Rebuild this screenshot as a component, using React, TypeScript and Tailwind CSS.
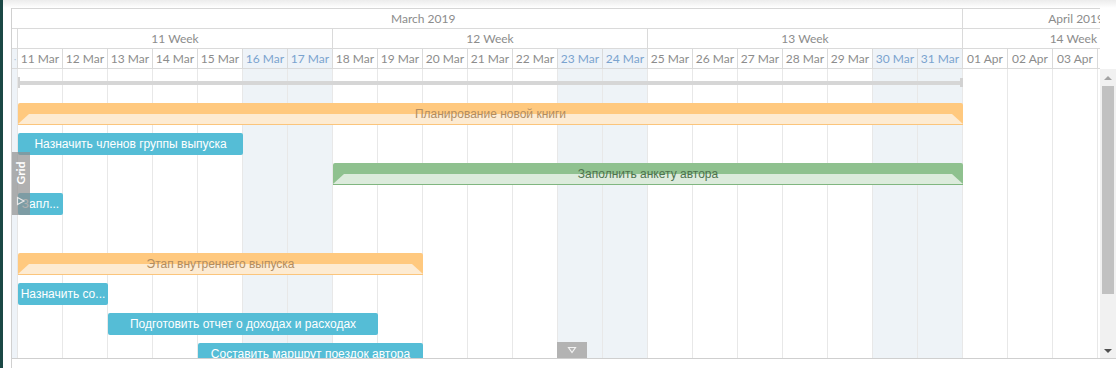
import React from "react";

type Row =
  | { kind: "summary"; start: number; len: number }
  | { kind: "project" | "green" | "task"; start: number; len: number; text: string }
  | { kind: "empty" };

const DAY = 45;
const OFF = 6;

const days = [
  "11 Mar", "12 Mar", "13 Mar", "14 Mar", "15 Mar", "16 Mar", "17 Mar",
  "18 Mar", "19 Mar", "20 Mar", "21 Mar", "22 Mar", "23 Mar", "24 Mar",
  "25 Mar", "26 Mar", "27 Mar", "28 Mar", "29 Mar", "30 Mar", "31 Mar",
  "01 Apr", "02 Apr", "03 Apr",
];
const weekend = (i: number) => [5, 6, 12, 13, 19, 20].includes(i);

const rows: Row[] = [
  { kind: "summary", start: 0, len: 21 },
  { kind: "project", start: 0, len: 21, text: "Планирование новой книги" },
  { kind: "task", start: 0, len: 5, text: "Назначить членов группы выпуска" },
  { kind: "green", start: 7, len: 14, text: "Заполнить анкету автора" },
  { kind: "task", start: 0, len: 1, text: "Запл..." },
  { kind: "empty" },
  { kind: "project", start: 0, len: 9, text: "Этап внутреннего выпуска" },
  { kind: "task", start: 0, len: 2, text: "Назначить со..." },
  { kind: "task", start: 2, len: 6, text: "Подготовить отчет о доходах и расходах" },
  { kind: "task", start: 4, len: 5, text: "Составить маршрут поездок автора" },
];

function SummaryBar({ start, len }: { start: number; len: number }) {
  return (
    <div className="flex items-center h-[11px] mt-[8px]" style={{ marginLeft: OFF + start * DAY, width: len * DAY }}>
      <div className="w-[2px] h-[11px] bg-[#d2d2d2]" />
      <div className="flex-1 h-[4px] bg-[#d6d6d6]" />
      <div className="w-[3px] h-[9px] bg-[#d2d2d2]" />
    </div>
  );
}

function StageBar({ start, len, text, green }: { start: number; len: number; text: string; green?: boolean }) {
  const dark = green ? "bg-[#8fc18f]" : "bg-[#ffc97f]";
  const light = green ? "bg-[#dcebdc]" : "bg-[#fdebd2]";
  const line = green ? "border-[#80b680]" : "border-[#fbc57c]";
  const color = green ? "text-[#4e734e]" : "text-[#b28d61]";
  return (
    <div
      className={`relative h-[22px] flex flex-col rounded-t-[2px] overflow-hidden border-b ${line}`}
      style={{ marginLeft: OFF + start * DAY, width: len * DAY }}
    >
      <div className={`h-[11px] ${dark}`} />
      <div className={`flex-1 ${dark}`}>
        <div className={`h-full ${light} [clip-path:polygon(11px_0,calc(100%-11px)_0,100%_100%,0_100%)]`} />
      </div>
      <div className={`absolute inset-0 flex items-center justify-center text-[12px] whitespace-nowrap ${color}`}>
        {text}
      </div>
    </div>
  );
}

function TaskBar({ start, len, text }: { start: number; len: number; text: string }) {
  return (
    <div
      className="h-[22px] rounded-[2px] bg-[#55bdd6] text-white text-[12px] flex items-center justify-center whitespace-nowrap overflow-hidden px-[2px]"
      style={{ marginLeft: OFF + start * DAY, width: len * DAY }}
    >
      {text}
    </div>
  );
}

export default function App() {
  return (
    <div className="w-[1116px] h-[368px] overflow-hidden flex bg-white">
      <div className="w-[3px] bg-[#1b4845]" />
      <div className="flex-1 flex flex-col">
        <div className="h-[8px] bg-gradient-to-b from-[#ececec] to-white" />
        <div className="flex flex-1">
          <div className="w-[8px]" />
          <div className="flex-1 flex flex-col border-l border-[#d0d0d0] font-[Lato,sans-serif] text-[12px] text-[#8c8c8c]">
            {/* header */}
            <div className="w-[1088px] border-t border-[#d6d6d6]">
              <div className="h-[20px] flex border-b border-[#dadada]">
                <div className="w-[951px] border-r border-[#dadada] flex items-center pl-[379px]">March 2019</div>
                <div className="flex-1 flex items-center justify-end overflow-hidden">
                  <span className="mr-[-4px] whitespace-nowrap">April 2019</span>
                </div>
              </div>
              <div className="h-[20px] flex border-b border-[#dadada]">
                <div className="w-[6px] border-r border-[#dadada]" />
                {["11 Week", "12 Week", "13 Week"].map((w) => (
                  <div key={w} className="w-[315px] border-r border-[#dadada] flex items-center justify-center">
                    {w}
                  </div>
                ))}
                <div className="flex-1 flex items-center justify-end pr-[3px] whitespace-nowrap">14 Week</div>
              </div>
              <div className="h-[20px] flex border-b border-[#dadada]">
                <div className="w-[6px] border-r border-[#dadada] bg-[#eef3f8] flex items-center justify-end overflow-hidden">
                  <span className="text-[8px] leading-none pr-[1px] text-[#a8bcd2]">·</span>
                </div>
                {days.map((d, i) => (
                  <div
                    key={d}
                    className={`w-[45px] border-r border-[#dadada] flex items-center justify-center whitespace-nowrap ${
                      weekend(i) ? "bg-[#eef3f8] text-[#7aa3cf]" : ""
                    }`}
                  >
                    {d}
                  </div>
                ))}
              </div>
            </div>
            {/* body */}
            <div className="flex h-[290px] border-b border-[#cfcfcf] font-['Liberation_Sans',Arial,sans-serif]">
              <div className="relative w-[1086px] overflow-hidden">
                <div className="absolute inset-0 flex">
                  <div className="w-[6px] bg-[#eef3f8] border-r border-[#e6e6e6]" />
                  {days.map((d, i) => (
                    <div
                      key={d}
                      className={`w-[45px] border-r border-[#e8e8e8] ${weekend(i) ? "bg-[#eef3f7]" : ""}`}
                    />
                  ))}
                </div>
                <div className="relative flex flex-col">
                  {rows.map((r, i) => (
                    <div key={i} className={`h-[30px] flex ${r.kind === "summary" ? "items-start" : "items-center"}`}>
                      {r.kind === "summary" && <SummaryBar start={r.start} len={r.len} />}
                      {r.kind === "project" && <StageBar start={r.start} len={r.len} text={r.text} />}
                      {r.kind === "green" && <StageBar start={r.start} len={r.len} text={r.text} green />}
                      {r.kind === "task" && <TaskBar start={r.start} len={r.len} text={r.text} />}
                    </div>
                  ))}
                </div>
                {/* grid toggle tab */}
                <div className="absolute left-0 top-[83px] w-[18px] h-[63px] bg-[#8f8f8f]/70 flex flex-col items-center text-white">
                  <div className="mt-[6px] h-[30px] flex items-center justify-center">
                    <span className="-rotate-90 font-[Lato,sans-serif] font-bold text-[12px] leading-none">Grid</span>
                  </div>
                  <svg width="10" height="10" viewBox="0 0 10 10" className="mt-[8px]">
                    <path d="M1.5 1.5 L8 5 L1.5 8.5 Z" fill="none" stroke="#e8e8e8" strokeWidth="1.2" />
                  </svg>
                </div>
                {/* bottom toggle */}
                <div className="absolute left-[545px] bottom-0 w-[30px] h-[16px] bg-[#b3b3b3] flex items-center justify-center">
                  <svg width="10" height="8" viewBox="0 0 10 8">
                    <path d="M1.5 1.5 L8.5 1.5 L5 6.5 Z" fill="none" stroke="#f2f2f2" strokeWidth="1.2" />
                  </svg>
                </div>
              </div>
              <div className="w-[2px]" />
              {/* scrollbar */}
              <div className="w-[16px] bg-[#f1f1f1] flex flex-col">
                <div className="h-[17px] flex items-center justify-center">
                  <div className="w-0 h-0 border-l-[4px] border-r-[4px] border-b-[4px] border-l-transparent border-r-transparent border-b-[#a3a3a3]" />
                </div>
                <div className="mx-[2px] h-[208px] bg-[#c1c1c1]" />
                <div className="flex-1 flex items-end justify-center pb-[5px]">
                  <div className="w-0 h-0 border-l-[4px] border-r-[4px] border-t-[4px] border-l-transparent border-r-transparent border-t-[#505050]" />
                </div>
              </div>
            </div>
          </div>
        </div>
      </div>
    </div>
  );
}
